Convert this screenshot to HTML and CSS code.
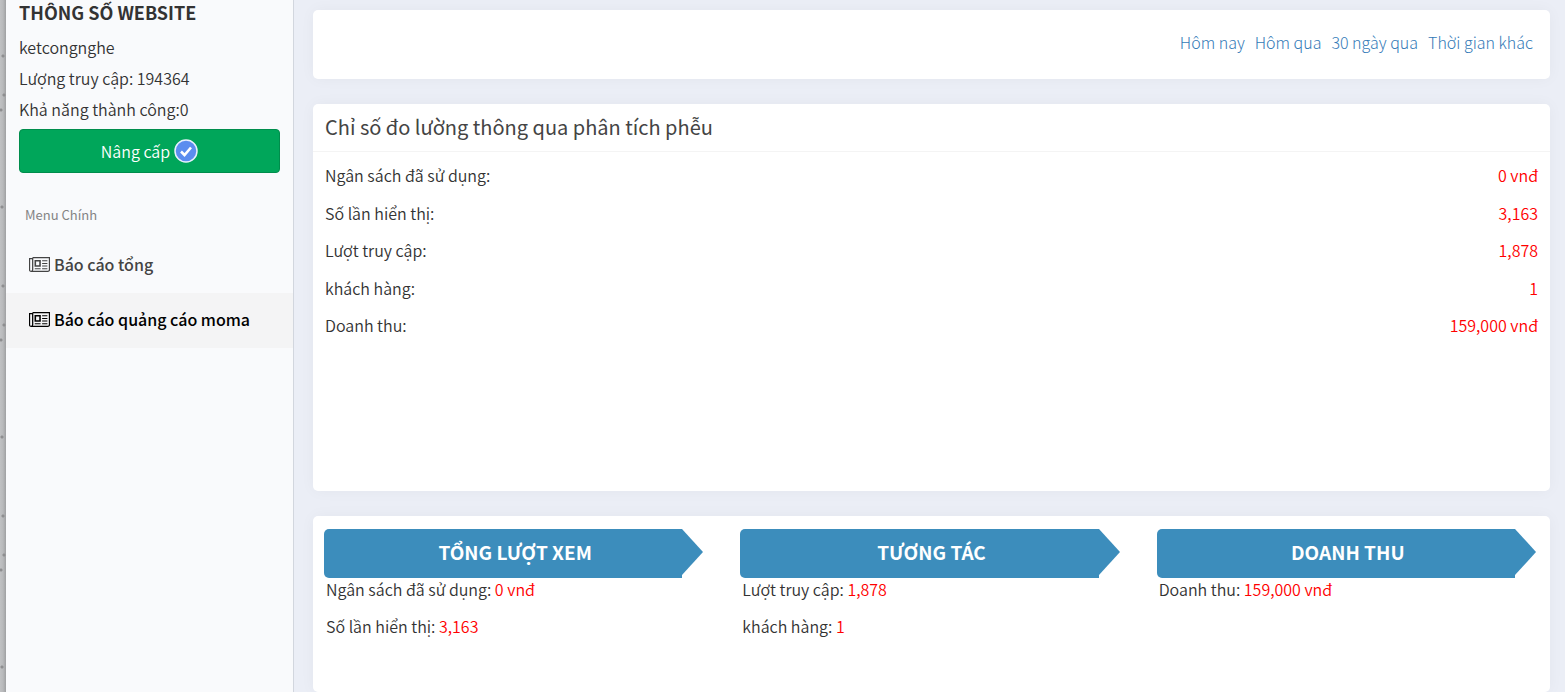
FILE: index.html
```html
<!DOCTYPE html>
<html lang="vi">
<head>
    <meta charset="UTF-8">
    <meta name="viewport" content="width=device-width, initial-scale=1.0">
    <title>Báo cáo quảng cáo moma</title>
    <link rel="stylesheet" href="styles.css">
</head>
<body>
    <!-- newspaper icon shared by the menu items -->
    <svg class="sprite" width="0" height="0">
        <symbol id="icon-news" viewBox="0 0 20 14">
            <path d="M3.5 .5H19.5V12Q19.5 13.5 18 13.5H2Q.5 13.5 .5 12V1.5H3.5M3.5 .5V12Q3.5 13.5 2 13.5" fill="none" stroke="currentColor" stroke-width="1.2"/>
            <path d="M6 3.5H10.500V8.500H6Z" fill="none" stroke="currentColor" stroke-width="1.5"/>
            <path d="M12.500 3.500H17.500M12.500 6H17.500M12.500 8.500H17.500M5.500 11H11M12.500 11H17.500" fill="none" stroke="currentColor"/>
        </symbol>
    </svg>

    <div class="wrapper">
        <aside class="sidebar">
            <div class="site-info">
                <h2>THÔNG SỐ WEBSITE</h2>
                <p>ketcongnghe</p>
                <p>Lượng truy cập: 194364</p>
                <p>Khả năng thành công:0</p>
                <button type="button" class="upgrade-btn">
                    Nâng cấp
                    <svg width="24" height="24" viewBox="0 0 24 24">
                        <circle cx="12" cy="12" r="11" fill="#5b8def" stroke="#e8f0fe" stroke-width="1.5"/>
                        <path d="M7 12.500L10.500 16L17 8.500" fill="none" stroke="#fff" stroke-width="2.600"/>
                    </svg>
                </button>
            </div>
            <nav class="menu">
                <div class="menu-title">Menu Chính</div>
                <a href="#"><svg width="21" height="15"><use href="#icon-news"/></svg>Báo cáo tổng</a>
                <a href="#" class="active"><svg width="21" height="15"><use href="#icon-news"/></svg>Báo cáo quảng cáo moma</a>
            </nav>
        </aside>

        <main class="content">
            <section class="card filter">
                <a href="#">Hôm nay</a>
                <a href="#">Hôm qua</a>
                <a href="#">30 ngày qua</a>
                <a href="#">Thời gian khác</a>
            </section>

            <section class="card metrics">
                <h3>Chỉ số đo lường thông qua phân tích phễu</h3>
                <dl>
                    <div><dt>Ngân sách đã sử dụng:</dt><dd>0 vnđ</dd></div>
                    <div><dt>Số lần hiển thị:</dt><dd>3,163</dd></div>
                    <div><dt>Lượt truy cập:</dt><dd>1,878</dd></div>
                    <div><dt>khách hàng:</dt><dd>1</dd></div>
                    <div><dt>Doanh thu:</dt><dd>159,000 vnđ</dd></div>
                </dl>
            </section>

            <section class="card funnel">
                <div class="step">
                    <h4><span>TỔNG LƯỢT XEM</span></h4>
                    <p>Ngân sách đã sử dụng: <b>0 vnđ</b></p>
                    <p>Số lần hiển thị: <b>3,163</b></p>
                </div>
                <div class="step">
                    <h4><span>TƯƠNG TÁC</span></h4>
                    <p>Lượt truy cập: <b>1,878</b></p>
                    <p>khách hàng: <b>1</b></p>
                </div>
                <div class="step">
                    <h4><span>DOANH THU</span></h4>
                    <p>Doanh thu: <b>159,000 vnđ</b></p>
                </div>
            </section>
        </main>
    </div>
</body>
</html>
```

FILE: styles.css
```css
* {
    margin: 0;
    padding: 0;
    box-sizing: border-box;
}

/* speckled grey strip left of the sidebar */
body {
    font-family: 'Source Sans Pro', 'Noto Sans CJK SC', 'Noto Sans', sans-serif;
    font-size: 16px;
    font-weight: 350;
    line-height: 24px;
    color: #333;
    background:
        radial-gradient(circle at 3px 56px, #8e8e90 1px, transparent 2px) 0 0 / 6px 230px repeat-y,
        radial-gradient(circle at 4px 95px, #8e8e90 1px, transparent 2px) 0 0 / 6px 230px repeat-y,
        radial-gradient(circle at 1px 110px, #8e8e90 1px, transparent 2px) 0 0 / 6px 230px repeat-y,
        radial-gradient(circle at 2px 207px, #8e8e90 1px, transparent 2px) 0 0 / 6px 230px repeat-y,
        linear-gradient(to right, #c0c1c3, #b8b9bb 3px, #9fa0a2 6px);
}

a {
    text-decoration: none;
}

.sprite {
    display: block;
}

.wrapper {
    display: flex;
    min-height: 100vh;
    margin-left: 6px;
    background: #ebeef6;
}

.sidebar {
    flex: 0 0 288px;
    background: #f9fafc;
    border-right: 1px solid #d2d6de;
}

.site-info {
    padding: 0 13px;
}

.site-info h2 {
    margin-bottom: 8px;
    font-size: 18px;
    font-weight: 700;
    line-height: 24px;
}

.site-info p {
    line-height: 31px;
}

.upgrade-btn {
    display: flex;
    align-items: center;
    justify-content: center;
    gap: 4px;
    width: 100%;
    height: 44px;
    margin-top: 4px;
    padding-bottom: 1px;
    font: inherit;
    color: #fff;
    background: #00a65a;
    border: 1px solid #008d4c;
    border-radius: 4px;
    cursor: pointer;
}

.menu {
    margin-top: 23px;
}

.menu-title {
    padding: 7px 19px 11px;
    font-size: 13px;
    font-weight: 400;
    color: #848484;
    line-height: 24px;
}

.menu a {
    display: flex;
    align-items: center;
    gap: 4px;
    height: 55px;
    padding: 0 23px 3px;
    font-weight: 500;
    color: #444;
}

.menu a.active {
    color: #000;
    background: #f4f4f5;
}

.content {
    flex: 1;
    display: flex;
    flex-direction: column;
    gap: 25px;
    padding: 10px 15px 0 19px;
}

.card {
    background: #fff;
    border-radius: 5px;
    box-shadow: 0 0 15px rgba(0, 0, 0, 0.04);
}

.filter {
    display: flex;
    justify-content: flex-end;
    gap: 10px;
    padding: 20px 17px 25px;
}

.filter a {
    font-weight: 300;
    color: #337ab7;
}

.metrics {
    min-height: 387px;
}

.metrics h3 {
    padding: 11px 12px 12px;
    font-size: 20px;
    font-weight: 400;
    line-height: 24px;
    color: #444;
    border-bottom: 1px solid #f4f4f4;
}

.metrics dl {
    display: grid;
    align-content: space-between;
    min-height: 196px;
    padding: 11px 12px;
}

.metrics dl div {
    display: flex;
    justify-content: space-between;
}

.metrics dd,
.step b {
    font-weight: 350;
    color: #f00;
}

.funnel {
    flex: 1;
    display: grid;
    grid-template-columns: repeat(3, 1fr);
    gap: 37px;
    padding: 13px 14px 0 11px;
}

.step h4 {
    display: flex;
    font-size: 19px;
    font-weight: 700;
    line-height: 45px;
    color: #fff;
}

.step h4 span {
    flex: 1;
    padding: 0 0 4px 24px;
    text-align: center;
    background: #3c8dbc;
    border-radius: 5px 0 0 5px;
}

/* arrow head */
.step h4::after {
    content: "";
    align-self: flex-start;
    border: solid transparent;
    border-width: 23px 0 23px 21px;
    border-left-color: #3c8dbc;
}

.step p {
    padding-left: 2px;
    margin-bottom: 15px;
    line-height: 22px;
}
```
